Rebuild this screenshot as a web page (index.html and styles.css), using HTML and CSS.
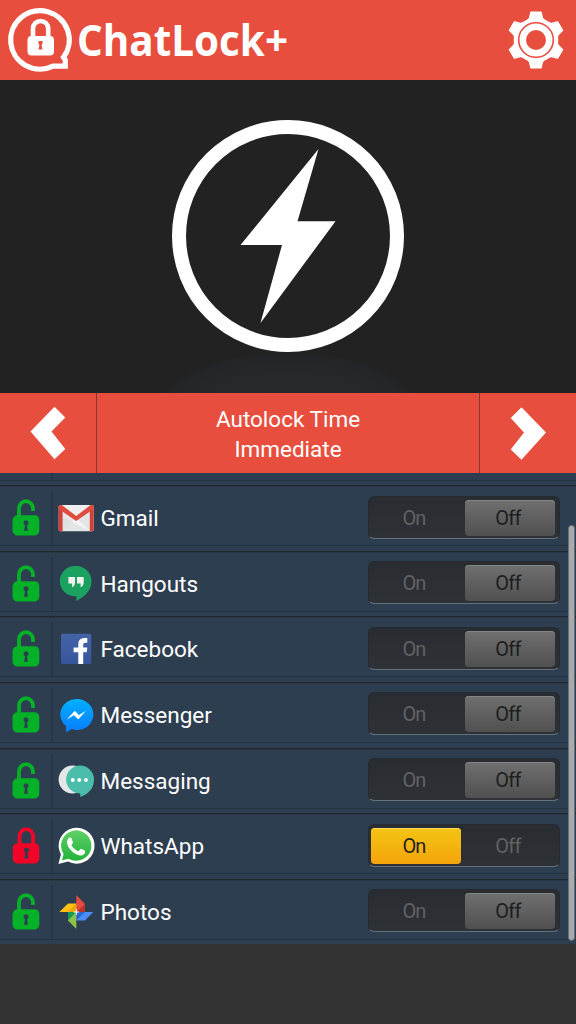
FILE: index.html
```html
<!DOCTYPE html>
<html lang="en">
<head>
<meta charset="utf-8">
<title>ChatLock+</title>
<link rel="stylesheet" href="styles.css">
</head>
<body>
<svg class="defs" aria-hidden="true">
  <defs>
    <linearGradient id="msgr" x1="0" y1="0" x2="0" y2="1"><stop offset="0" stop-color="#00b0ff"/><stop offset="1" stop-color="#0a7cff"/></linearGradient>
    <linearGradient id="wa" x1="0" y1="0" x2="0" y2="1"><stop offset="0" stop-color="#5fd068"/><stop offset="1" stop-color="#22b33a"/></linearGradient>
    <linearGradient id="fb" x1="0" y1="0" x2="0" y2="1"><stop offset="0" stop-color="#4564a8"/><stop offset="1" stop-color="#36559b"/></linearGradient>
    <symbol id="lock-open" viewBox="0 0 28 38">
      <path d="M7 18V9.400a7 7.200 0 0 1 14 0V12" fill="none" stroke="currentColor" stroke-width="3.800"/>
      <path fill="currentColor" fill-rule="evenodd" d="M5.500 16.300H22.500A5 5 0 0 1 27.300 21V31.500A5 5 0 0 1 22.500 36.600H5.500A5 5 0 0 1 .5 31.500V21A5 5 0 0 1 5.500 16.300ZM14 21.200a2.600 2.600 0 0 0-1.600 4.600l.6.5-.9 5.500h3.800L15 26.300l.6-.5A2.600 2.600 0 0 0 14 21.200Z"/>
    </symbol>
    <symbol id="lock-closed" viewBox="0 0 28 38">
      <path d="M7.500 18V9.400a6.800 7.200 0 0 1 13.600 0V18" fill="none" stroke="currentColor" stroke-width="3.800"/>
      <path fill="currentColor" fill-rule="evenodd" d="M5.500 16.300H22.500A5 5 0 0 1 27.300 21V31.500A5 5 0 0 1 22.500 36.600H5.500A5 5 0 0 1 .8 31.500V21A5 5 0 0 1 5.500 16.300ZM14.500 20.500a2.600 2.600 0 0 0-1.600 4.600l.6.5-1 6h4L15.500 25.600l.6-.5A2.600 2.600 0 0 0 14.500 20.500Z"/>
    </symbol>
  </defs>
</svg>

<div class="app">
  <header class="topbar">
    <svg class="brand" width="300" height="80" viewBox="0 0 300 80">
      <path d="M63.500 57.400A29.300 29.300 0 1 0 53 66.200H65.300V60Z" fill="none" stroke="#fff" stroke-width="5.200"/>
      <path d="M33 38V28.500a7.600 7.500 0 0 1 15.200 0V38" fill="none" stroke="#fff" stroke-width="4.600"/>
      <path fill="#fff" fill-rule="evenodd" d="M31.500 36H50a4 4 0 0 1 4 4V51.500a4 4 0 0 1-4 4H31.500a4 4 0 0 1-4-4V40a4 4 0 0 1 4-4ZM38.500 41v3l1 .7-1 4.800h4l-1-4.800 1-.7v-3Z"/>
      <text class="brand-name" x="77" y="56" textLength="211" lengthAdjust="spacingAndGlyphs">ChatLock+</text>
    </svg>
    <svg class="gear" width="56" height="58" viewBox="-28 -29 56 58">
      <g fill="#fff">
        <circle r="22.300"/>
        <path id="tooth" d="M-9.500 -19.500L-7.200 -22L-5.500 -28.500H5.500L7.200 -22L9.500 -19.500Z"/>
        <use href="#tooth" transform="rotate(60)"/><use href="#tooth" transform="rotate(120)"/>
        <use href="#tooth" transform="rotate(180)"/><use href="#tooth" transform="rotate(240)"/><use href="#tooth" transform="rotate(300)"/>
      </g>
      <circle r="17.300" fill="none" stroke="#e84e3e" stroke-width="1.600"/>
      <circle r="10" fill="#e84e3e"/>
    </svg>
  </header>

  <section class="hero">
    <svg width="236" height="236" viewBox="-118 -118 236 236">
      <circle r="109" fill="none" stroke="#fff" stroke-width="14"/>
      <path fill="#fff" d="M30.500 -87L9.500 -14.800H47.500L-27.500 87L-6 9H-47.500Z"/>
    </svg>
  </section>

  <nav class="timer">
    <button class="arrow"><svg width="36" height="54" viewBox="0 0 36 54"><path fill="#fff" d="M24.500 .8L35.300 11.500 21.500 25.500 35.300 43 24.500 53.200 .5 25.500Z"/></svg></button>
    <div class="timer-label">Autolock Time<br>Immediate</div>
    <button class="arrow arrow-next"><svg width="36" height="54" viewBox="0 0 36 54"><path fill="#fff" d="M11.500 1.300L.7 12 14 26.500 .7 43.500 11.500 53.800 36 26.500Z"/></svg></button>
  </nav>

  <main class="list">
    <div class="row row-cut"><div class="row-in"><span class="status"></span></div></div>

    <div class="row"><div class="row-in">
      <span class="status"><svg class="lock"><use href="#lock-open"/></svg></span>
      <svg class="icon" viewBox="0 0 36 36"><rect x=".7" y="5" width="35" height="26.300" rx="1.500" fill="#e5e5e5"/><path d="M5 30L18 18 31 30Z" fill="#f5f5f5"/><path d="M5 17L18 24 31 30H5Z" fill="#d9dadb" opacity=".6"/><path d="M.7 6.500Q.7 5 2.200 5L4.600 6.500V31.200H2.200Q.7 31.200.7 29.700ZM35.700 6.500Q35.700 5 34.200 5L31.800 6.500V31.200H34.200Q35.700 31.200 35.700 29.700Z" fill="#d2403a"/><path d="M1 5.300L3.800 5 18.200 16 32.600 5 35.600 5.500V9L18.200 21 .7 9Z" fill="#e04b3f"/><path d="M4.500 5H32L18.200 15.500Z" fill="#eee"/></svg>
      <span class="name">Gmail</span>
      <div class="toggle"><span>On</span><span class="off">Off</span></div>
    </div></div>

    <div class="row"><div class="row-in">
      <span class="status"><svg class="lock"><use href="#lock-open"/></svg></span>
      <svg class="icon" viewBox="0 0 36 36"><path d="M18.300 0A15.300 15.200 0 1 0 18.300 30.300V35Q33.500 27 33.500 15.200A15.300 15.200 0 0 0 18.300 0Z" fill="#1ba260"/><path fill="#f1f1f1" d="M10.400 11H17V16.500Q17 20 14 21.300V17.400H10.400ZM19 11H25.700V16.500Q25.700 20 22.600 21.300V17.400H19Z"/></svg>
      <span class="name">Hangouts</span>
      <div class="toggle"><span>On</span><span class="off">Off</span></div>
    </div></div>

    <div class="row"><div class="row-in">
      <span class="status"><svg class="lock"><use href="#lock-open"/></svg></span>
      <svg class="icon" viewBox="0 0 36 36"><rect x="3" y="2.800" width="30.300" height="30.300" rx="1.500" fill="url(#fb)"/><path fill="#fff" d="M20.300 33V21.200H15.600V16.400H20.300V13Q20.300 7 26.500 7H29.300V11.700H27.200Q25.200 11.700 25.200 13.600V16.400H29.300L28.700 21.200H25.200V33Z"/></svg>
      <span class="name">Facebook</span>
      <div class="toggle"><span>On</span><span class="off">Off</span></div>
    </div></div>

    <div class="row"><div class="row-in">
      <span class="status"><svg class="lock"><use href="#lock-open"/></svg></span>
      <svg class="icon" viewBox="0 0 36 36"><path fill="url(#msgr)" d="M18.300 2A16 15.300 0 0 0 8 29V35.300L13.800 32.100A16.200 15.500 0 1 0 18.300 2Z"/><path fill="#fff" d="M8.800 22.500L16.700 13.700 21 18 28 13.700 20.300 22.500 16 18.200Z"/></svg>
      <span class="name">Messenger</span>
      <div class="toggle"><span>On</span><span class="off">Off</span></div>
    </div></div>

    <div class="row"><div class="row-in">
      <span class="status"><svg class="lock"><use href="#lock-open"/></svg></span>
      <svg class="icon" viewBox="0 0 36 36"><circle cx="14.600" cy="16.600" r="14" fill="#e4e6e7"/><path fill="#4bbdab" d="M22 2.600A14 14 0 1 0 22.300 30.600V34Q36 29 36 16.600A14 14 0 0 0 22 2.600Z"/><g fill="#fff"><circle cx="14.800" cy="17" r="1.900"/><circle cx="21.300" cy="17" r="1.900"/><circle cx="28" cy="17" r="1.900"/></g></svg>
      <span class="name">Messaging</span>
      <div class="toggle"><span>On</span><span class="off">Off</span></div>
    </div></div>

    <div class="row"><div class="row-in">
      <span class="status locked"><svg class="lock"><use href="#lock-closed"/></svg></span>
      <svg class="icon" viewBox="0 0 36 36"><path fill="#fff" d="M.4 36L2.900 26.500A18 18 0 1 1 10 33.500Z"/><path fill="url(#wa)" d="M4 32.300L5.600 26A15.200 15.200 0 1 1 10.600 30.700Z"/><path fill="#fff" d="M11 9.800Q12.300 9.200 13.200 9.800L15 14.200Q15.200 14.900 13.300 17 15.800 21.500 20.500 23.200L22.500 20.900Q23 20.500 27 22.700 27.600 26.200 24.200 27.200 20.500 28.500 14.500 23.700 8.900 18.700 9 14 9.200 11.200 11 9.800Z"/></svg>
      <span class="name">WhatsApp</span>
      <div class="toggle"><span class="on">On</span><span>Off</span></div>
    </div></div>

    <div class="row"><div class="row-in">
      <span class="status"><svg class="lock"><use href="#lock-open"/></svg></span>
      <svg class="icon" viewBox="0 0 36 36"><path fill="#e34d41" d="M18.300 1V18H27V10Z"/><path fill="#bd342c" d="M18.300 18L27 10V18Z"/><path fill="#fbc015" d="M1.300 18H18.300V9.400H10Z"/><path fill="#eda40f" d="M18.300 18V9.400L10 18Z"/><path fill="#4a8df6" d="M35.300 18H18.300V26.500H27Z"/><path fill="#2d66d0" d="M18.300 18V26.500L27 18Z"/><path fill="#8bc34a" d="M18.300 35V18H10V26.500Z"/><path fill="#149a58" d="M18.300 18H10V26.500Z"/><path fill="#fff" d="M17.800 15.300h1v2.200H21v1h-2.200v2.200h-1v-2.200h-2.200v-1h2.200Z"/></svg>
      <span class="name">Photos</span>
      <div class="toggle"><span>On</span><span class="off">Off</span></div>
    </div></div>
    <div class="scrollbar"></div>
  </main>
</div>
</body>
</html>
```

FILE: styles.css
```css
* { box-sizing: border-box; }
body {
  margin: 0;
  background: #333;
  font-family: Roboto, "Liberation Sans", sans-serif;
  color: #fff;
}
.defs { position: absolute; width: 0; height: 0; }
.app { width: 576px; height: 1024px; display: flex; flex-direction: column; overflow: hidden; }

.topbar {
  height: 80px;
  flex: none;
  display: flex;
  align-items: center;
  justify-content: space-between;
  padding-right: 12.5px;
  background: #e84e3e;
}
.brand { display: block; overflow: visible; }
.brand-name { font: 700 43px "Open Sans", "Noto Sans", sans-serif; fill: #fff; }

.hero {
  height: 313px;
  flex: none;
  display: flex;
  justify-content: center;
  align-items: flex-start;
  padding-top: 38px;
  background: radial-gradient(ellipse 130px 52px at 50% 324px, #292a2c 0%, #27282a 60%, #242527 90%, #222 100%);
}

.timer { height: 80px; flex: none; display: flex; background: #e84e3e; }
.arrow {
  width: 97px;
  padding: 0 0 0 30px;
  border: 0;
  border-right: 1px solid #853a35;
  background: none;
  display: flex;
  align-items: center;
}
.arrow-next { border-right: 0; border-left: 1px solid #853a35; }
.timer-label { flex: 1; padding-top: 11px; text-align: center; font-size: 22.5px; line-height: 30px; }

.list { position: relative; flex: none; height: 471px; overflow: hidden; background: #2d3e50; }
.row { height: 65.6px; border-top: 1px solid #20272f; box-shadow: inset 0 1px #293745; }
.row-cut { margin-top: -53.4px; }
.row-in {
  height: 60px;
  padding: 0 16px 0 0;
  border-bottom: 1px solid #243342;
  display: flex;
  align-items: center;
}
.status {
  width: 53px;
  height: 54px;
  flex: none;
  align-self: flex-end;
  padding: 8px 0 0 12px;
  border-right: 2px solid #273747;
  color: #05b127;
}
.locked { color: #f00528; }
.lock { display: block; width: 28px; height: 38px; }
.icon { width: 36px; height: 36px; flex: none; margin: 5px 0 0 5px; overflow: visible; }
.name { margin: 5px 0 0 6.5px; font-size: 22.5px; line-height: 30px; flex: 1; }

.toggle {
  width: 192px;
  height: 43px;
  margin-top: 3px;
  padding: 3px;
  display: flex;
  gap: 4px;
  border: 1px solid #252b32;
  border-bottom-color: #66707b;
  border-radius: 6px;
  background: linear-gradient(#292c31, #2e3136);
}
.toggle span {
  width: 90px;
  height: 36px;
  padding-right: 4px;
  border-radius: 4px;
  font-size: 20px;
  line-height: 37px;
  letter-spacing: -.8px;
  text-align: center;
  color: #626262;
}
.toggle span:first-child { margin-left: -1px; }
.toggle .off { color: #1e1e1e; background: linear-gradient(#707070, #505050); box-shadow: inset 0 1px #858585; }
.toggle .on { color: #222; background: linear-gradient(#f5c413, #f3a40b); box-shadow: inset 0 1px #fbdc5b; }

.scrollbar {
  position: absolute;
  top: 52px;
  right: 1px;
  width: 7px;
  height: 416px;
  border: 1px solid #66717c;
  border-radius: 4px;
  background: #aaa;
}
```
